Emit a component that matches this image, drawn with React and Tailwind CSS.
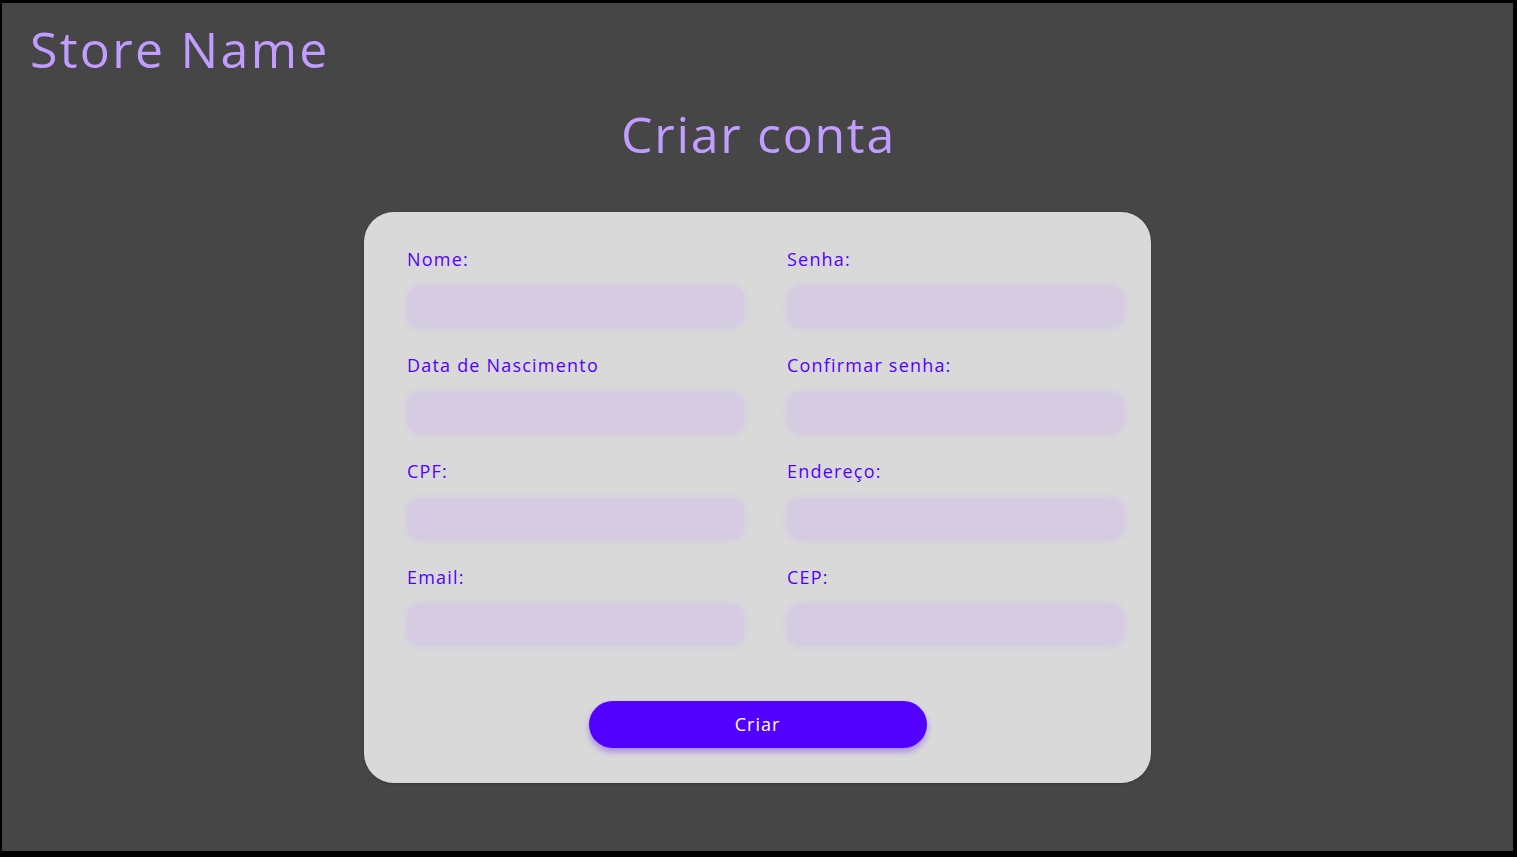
import React from 'react';

const fields = [
  ['Nome:', 'Senha:'],
  ['Data de Nascimento', 'Confirmar senha:'],
  ['CPF:', 'Endereço:'],
  ['Email:', 'CEP:'],
];

function Field({ label }) {
  return (
    <div className="flex flex-col">
      <label className="h-6 text-[18px] leading-6 text-[#5200ff] tracking-[1.2px]">{label}</label>
      <div className="mt-[15px] h-[42px] w-[337px] rounded-[14px] bg-[#d5cce2] shadow-[0_0_4px_2px_rgba(213,204,226,0.9)]" />
    </div>
  );
}

export default function App() {
  return (
    <div
      className="box-border h-[857px] w-[1517px] overflow-hidden border-t-[3px] border-l-2 border-r-4 border-b-[6px] border-black bg-[#464646]"
      style={{ fontFamily: '"Open Sans", "Noto Sans", sans-serif' }}
    >
      <header className="pl-[28px] pt-[14px]">
        <h1 className="text-[50px] leading-[64px] text-[#c09dff] tracking-[2.3px]">Store Name</h1>
      </header>

      <h2 className="mt-[21px] pl-[2px] text-center text-[50px] leading-[64px] text-[#c09dff] tracking-[1.7px]">Criar conta</h2>

      <div className="mx-auto mt-[46px] w-[787px] rounded-[30px] bg-[#d9d9d9] pb-[35px] pl-[43px] pr-[27px] pt-[35px] shadow-[0_1px_3px_rgba(0,0,0,0.2)]">
        <div className="flex flex-col gap-[25px]">
          {fields.map(([a, b]) => (
            <div key={a} className="flex gap-[43px]">
              <Field label={a} />
              <Field label={b} />
            </div>
          ))}
        </div>
        <div className="mt-[55px] flex justify-center pr-[16px]">
          <button className="h-[47px] w-[338px] rounded-full bg-[#5200ff] text-[18px] text-white tracking-[1px] shadow-[0_4px_6px_rgba(82,0,255,0.35)]">
            Criar
          </button>
        </div>
      </div>
    </div>
  );
}
